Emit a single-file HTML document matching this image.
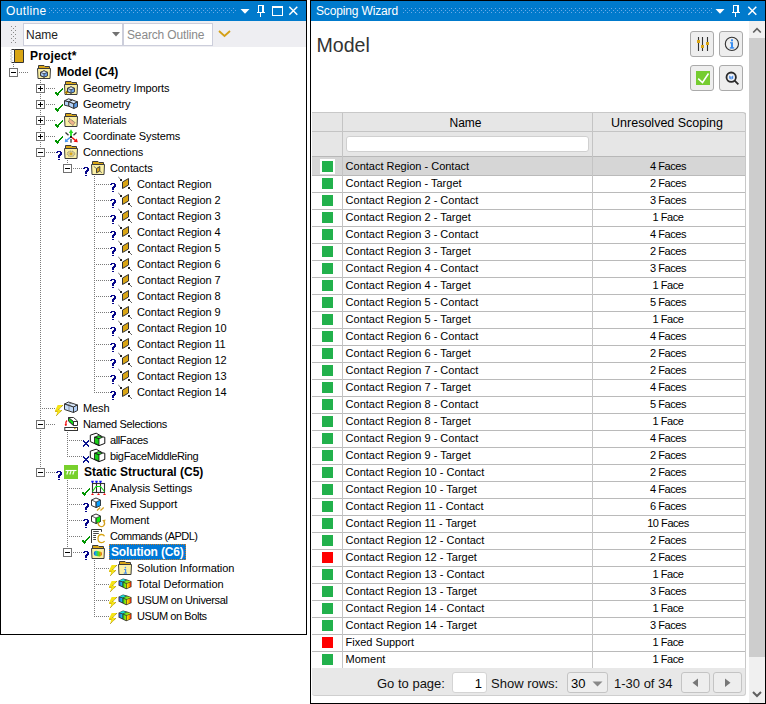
<!DOCTYPE html>
<html><head><meta charset="utf-8">
<style>
*{margin:0;padding:0;box-sizing:border-box}
html,body{width:766px;height:704px;overflow:hidden;background:#fff;font-family:"Liberation Sans", sans-serif;}
.panel{position:absolute;border:1px solid #000;background:#fff;overflow:hidden}
.title{position:absolute;left:0;top:0;right:0;height:20px;background:#007acc;color:#fff;font-size:12px;line-height:20px;padding-left:5px;letter-spacing:-0.15px}
.grip{position:absolute;top:7px;height:5px;background-image:radial-gradient(circle,#5fa6e6 0.7px,transparent 0.8px);background-size:4px 2.5px}
.tbar{position:absolute;left:0;top:20px;right:0;height:26px;background:#eeeef2}
.exp{position:absolute;width:9px;height:9px;border:1px solid #717171;background:#fff}
.exp .h{position:absolute;left:1px;top:3px;width:5px;height:1px;background:#000}
.exp .v{position:absolute;left:3px;top:1px;width:1px;height:5px;background:#000}
.ic{position:absolute;overflow:visible}
.vd{position:absolute;width:1px;background:linear-gradient(to bottom,#7a7a7a 50%,transparent 50%);background-size:1px 2px}
.hd{position:absolute;height:1px;background:linear-gradient(to right,#7a7a7a 50%,transparent 50%);background-size:2px 1px}
.tt{position:absolute;font-size:11px;line-height:16px;white-space:nowrap;color:#000;letter-spacing:-0.1px}
.tt.b{font-weight:bold;font-size:12px;letter-spacing:0}
.tt.sel{background:#0078d7;color:#fff;outline:1px dotted #c47a2a;outline-offset:-1px;padding:0 2px;margin-left:-2px}
.tr{position:absolute;left:312px;width:434px;background:#fff}
.tr.sel{background:#d6d6d6}
.hl{position:absolute;left:312px;width:434px;height:1px;background:#bababa}
.sq{position:absolute;left:322px;width:11px;height:11px}
.sq.g{background:#22b14c}
.sq.r{background:#ff0000}
.sqbg{position:absolute;left:320px;width:15px;height:15px;background:#fff}
.tn{position:absolute;left:345.6px;font-size:11px;line-height:16px;white-space:nowrap;color:#000}
.tf{position:absolute;left:592px;width:152px;text-align:center;font-size:11px;line-height:16px;white-space:nowrap;color:#000;letter-spacing:-0.45px}
</style></head><body>


<svg width="0" height="0" style="position:absolute"><defs>
<linearGradient id="gL" x1="0" x2="1" y1="0" y2="0"><stop offset="0" stop-color="#2848f0"/><stop offset="1" stop-color="#10e0e0"/></linearGradient>
<linearGradient id="gT" x1="0" x2="1" y1="0" y2="0"><stop offset="0" stop-color="#20d830"/><stop offset="1" stop-color="#e8f000"/></linearGradient>
<linearGradient id="gF" x1="0" x2="1" y1="0" y2="0"><stop offset="0" stop-color="#18d818"/><stop offset="1" stop-color="#c8f000"/></linearGradient>
<linearGradient id="gR" x1="0" x2="1" y1="0" y2="0"><stop offset="0" stop-color="#f8f000"/><stop offset="0.6" stop-color="#f8a000"/><stop offset="1" stop-color="#f01000"/></linearGradient>
<linearGradient id="gS" x1="0" x2="1" y1="0" y2="0"><stop offset="0" stop-color="#2040e0"/><stop offset="0.3" stop-color="#10d8d0"/><stop offset="0.55" stop-color="#50e010"/><stop offset="0.8" stop-color="#d0d000"/><stop offset="1" stop-color="#f02000"/></linearGradient>
</defs></svg>
<div class="panel" style="left:0;top:0;width:307px;height:635px">
 <div class="title" style="letter-spacing:0.35px">Outline</div>
 <svg style="position:absolute;left:-1px;top:-1px" width="307" height="21"><path d="M49 8h1v1h-1zM53 8h1v1h-1zM57 8h1v1h-1zM61 8h1v1h-1zM65 8h1v1h-1zM69 8h1v1h-1zM73 8h1v1h-1zM77 8h1v1h-1zM81 8h1v1h-1zM85 8h1v1h-1zM89 8h1v1h-1zM93 8h1v1h-1zM97 8h1v1h-1zM101 8h1v1h-1zM105 8h1v1h-1zM109 8h1v1h-1zM113 8h1v1h-1zM117 8h1v1h-1zM121 8h1v1h-1zM125 8h1v1h-1zM129 8h1v1h-1zM133 8h1v1h-1zM137 8h1v1h-1zM141 8h1v1h-1zM145 8h1v1h-1zM149 8h1v1h-1zM153 8h1v1h-1zM157 8h1v1h-1zM161 8h1v1h-1zM165 8h1v1h-1zM169 8h1v1h-1zM173 8h1v1h-1zM177 8h1v1h-1zM181 8h1v1h-1zM185 8h1v1h-1zM189 8h1v1h-1zM193 8h1v1h-1zM197 8h1v1h-1zM201 8h1v1h-1zM205 8h1v1h-1zM209 8h1v1h-1zM213 8h1v1h-1zM217 8h1v1h-1zM221 8h1v1h-1zM225 8h1v1h-1zM229 8h1v1h-1zM233 8h1v1h-1zM51 10h1v1h-1zM55 10h1v1h-1zM59 10h1v1h-1zM63 10h1v1h-1zM67 10h1v1h-1zM71 10h1v1h-1zM75 10h1v1h-1zM79 10h1v1h-1zM83 10h1v1h-1zM87 10h1v1h-1zM91 10h1v1h-1zM95 10h1v1h-1zM99 10h1v1h-1zM103 10h1v1h-1zM107 10h1v1h-1zM111 10h1v1h-1zM115 10h1v1h-1zM119 10h1v1h-1zM123 10h1v1h-1zM127 10h1v1h-1zM131 10h1v1h-1zM135 10h1v1h-1zM139 10h1v1h-1zM143 10h1v1h-1zM147 10h1v1h-1zM151 10h1v1h-1zM155 10h1v1h-1zM159 10h1v1h-1zM163 10h1v1h-1zM167 10h1v1h-1zM171 10h1v1h-1zM175 10h1v1h-1zM179 10h1v1h-1zM183 10h1v1h-1zM187 10h1v1h-1zM191 10h1v1h-1zM195 10h1v1h-1zM199 10h1v1h-1zM203 10h1v1h-1zM207 10h1v1h-1zM211 10h1v1h-1zM215 10h1v1h-1zM219 10h1v1h-1zM223 10h1v1h-1zM227 10h1v1h-1zM231 10h1v1h-1zM235 10h1v1h-1zM49 12h1v1h-1zM53 12h1v1h-1zM57 12h1v1h-1zM61 12h1v1h-1zM65 12h1v1h-1zM69 12h1v1h-1zM73 12h1v1h-1zM77 12h1v1h-1zM81 12h1v1h-1zM85 12h1v1h-1zM89 12h1v1h-1zM93 12h1v1h-1zM97 12h1v1h-1zM101 12h1v1h-1zM105 12h1v1h-1zM109 12h1v1h-1zM113 12h1v1h-1zM117 12h1v1h-1zM121 12h1v1h-1zM125 12h1v1h-1zM129 12h1v1h-1zM133 12h1v1h-1zM137 12h1v1h-1zM141 12h1v1h-1zM145 12h1v1h-1zM149 12h1v1h-1zM153 12h1v1h-1zM157 12h1v1h-1zM161 12h1v1h-1zM165 12h1v1h-1zM169 12h1v1h-1zM173 12h1v1h-1zM177 12h1v1h-1zM181 12h1v1h-1zM185 12h1v1h-1zM189 12h1v1h-1zM193 12h1v1h-1zM197 12h1v1h-1zM201 12h1v1h-1zM205 12h1v1h-1zM209 12h1v1h-1zM213 12h1v1h-1zM217 12h1v1h-1zM221 12h1v1h-1zM225 12h1v1h-1zM229 12h1v1h-1zM233 12h1v1h-1z" fill="#6aaae8"/><path d="M240.5 9 H249.5 L245 13.7 Z" fill="#fff"/><rect x="258" y="5" width="1" height="7" fill="#fff"/><rect x="262" y="5" width="2" height="7" fill="#fff"/><rect x="258" y="5" width="6" height="1" fill="#fff"/><rect x="257" y="12" width="8" height="1" fill="#fff"/><rect x="260" y="13" width="1" height="4" fill="#fff"/><rect x="272" y="6" width="11" height="2" fill="#fff"/><rect x="272" y="6" width="1" height="10" fill="#fff"/><rect x="282" y="6" width="1" height="10" fill="#fff"/><rect x="272" y="15" width="11" height="1" fill="#fff"/><path d="M289.3 6.8 L297.3 14.8 M297.3 6.8 L289.3 14.8" stroke="#fff" stroke-width="1.5"/></svg>
 <div class="tbar"></div>
 <svg style="position:absolute;left:-1px;top:-1px" width="20" height="50"><path d="M11 26h1v1h-1zM15 26h1v1h-1zM13 28h1v1h-1zM11 30h1v1h-1zM15 30h1v1h-1zM13 32h1v1h-1zM11 34h1v1h-1zM15 34h1v1h-1zM13 36h1v1h-1zM11 38h1v1h-1zM15 38h1v1h-1zM13 40h1v1h-1zM11 42h1v1h-1zM15 42h1v1h-1z" fill="#8a8a8a"/></svg>
 <div style="position:absolute;left:22px;top:22px;width:100px;height:23px;background:#fff;border:1px solid #cccedb"></div>
 <div style="position:absolute;left:25px;top:23px;height:23px;line-height:23px;font-size:12px;color:#1e1e1e">Name</div>
 <svg style="position:absolute;left:111px;top:31px" width="9" height="5"><path d="M0 0 H8 L4 4.5 Z" fill="#717171"/></svg>
 <div style="position:absolute;left:122px;top:22px;width:90px;height:23px;background:#fff;border:1px solid #cccedb"></div>
 <div style="position:absolute;left:126px;top:23px;height:23px;line-height:23px;font-size:12px;color:#8a8a8a;letter-spacing:-0.15px">Search Outline</div>
 <svg style="position:absolute;left:217px;top:29px" width="14" height="8"><path d="M1 1 L6.5 6 L12 1" fill="none" stroke="#d4a017" stroke-width="1.8"/></svg>
</div>

<div style="position:absolute;left:0;top:0;width:307px;height:635px;overflow:hidden">
<div class="vd" style="left:13px;top:64px;height:9px"></div>
<div class="vd" style="left:40px;top:80px;height:393px"></div>
<div class="vd" style="left:67px;top:160px;height:9px"></div>
<div class="vd" style="left:94px;top:176px;height:217px"></div>
<div class="vd" style="left:67px;top:432px;height:25px"></div>
<div class="vd" style="left:67px;top:480px;height:73px"></div>
<div class="vd" style="left:94px;top:560px;height:57px"></div>
<div class="hd" style="left:19px;top:72px;width:9px"></div>
<div class="hd" style="left:46px;top:88px;width:9px"></div>
<div class="hd" style="left:46px;top:104px;width:9px"></div>
<div class="hd" style="left:46px;top:120px;width:9px"></div>
<div class="hd" style="left:46px;top:136px;width:9px"></div>
<div class="hd" style="left:46px;top:152px;width:9px"></div>
<div class="hd" style="left:73px;top:168px;width:9px"></div>
<div class="hd" style="left:96px;top:184px;width:13px"></div>
<div class="hd" style="left:96px;top:200px;width:13px"></div>
<div class="hd" style="left:96px;top:216px;width:13px"></div>
<div class="hd" style="left:96px;top:232px;width:13px"></div>
<div class="hd" style="left:96px;top:248px;width:13px"></div>
<div class="hd" style="left:96px;top:264px;width:13px"></div>
<div class="hd" style="left:96px;top:280px;width:13px"></div>
<div class="hd" style="left:96px;top:296px;width:13px"></div>
<div class="hd" style="left:96px;top:312px;width:13px"></div>
<div class="hd" style="left:96px;top:328px;width:13px"></div>
<div class="hd" style="left:96px;top:344px;width:13px"></div>
<div class="hd" style="left:96px;top:360px;width:13px"></div>
<div class="hd" style="left:96px;top:376px;width:13px"></div>
<div class="hd" style="left:96px;top:392px;width:13px"></div>
<div class="hd" style="left:42px;top:408px;width:13px"></div>
<div class="hd" style="left:46px;top:424px;width:9px"></div>
<div class="hd" style="left:69px;top:440px;width:13px"></div>
<div class="hd" style="left:69px;top:456px;width:13px"></div>
<div class="hd" style="left:46px;top:472px;width:9px"></div>
<div class="hd" style="left:69px;top:488px;width:13px"></div>
<div class="hd" style="left:69px;top:504px;width:13px"></div>
<div class="hd" style="left:69px;top:520px;width:13px"></div>
<div class="hd" style="left:69px;top:536px;width:13px"></div>
<div class="hd" style="left:73px;top:552px;width:9px"></div>
<div class="hd" style="left:96px;top:568px;width:13px"></div>
<div class="hd" style="left:96px;top:584px;width:13px"></div>
<div class="hd" style="left:96px;top:600px;width:13px"></div>
<div class="hd" style="left:96px;top:616px;width:13px"></div>
<svg class="ic" style="left:10px;top:48px" width="16" height="16"><path d="M4.5 1.5 H13.5 V14.5 H4.5" fill="#d9a514" stroke="#333"/><rect x="2" y="1.5" width="2.5" height="13" fill="#fff"/><path d="M4.5 1.5 H1.5 M4.5 14.5 H1.5 M4.5 1.5 V14.5" stroke="#333" fill="none"/><path d="M0.5 2 L2 3.5 L0.5 5 L2 6.5 L0.5 8 L2 9.5 L0.5 11 L2 12.5 L0.5 14" fill="none" stroke="#b0b0b0" stroke-width="0.9"/></svg>
<div class="tt b" style="left:30px;top:48px;letter-spacing:0.15px">Project*</div>
<div class="exp" style="left:9px;top:68px"><div class="h"></div></div>
<svg class="ic" style="left:37px;top:64px" width="16" height="16"><path d="M1.5 4.5 V1.5 H7 L8 2.5 H12.5 V4.5" fill="#d9a514" stroke="#3c3c3c"/><path d="M0.5 4.5 H13.5 L13 14.5 H1 Z" fill="#fbf0a4" stroke="#3c3c3c"/><path d="M3.5 8.3 L7 6.8 L10.5 8.3 V11.7 L7 13.2 L3.5 11.7 Z" fill="#a6c8f4" stroke="#3a3a3a" stroke-width="0.9"/><path d="M3.5 8.3 L7 9.8 L10.5 8.3 L7 6.8 Z" fill="#d8e8fc"/><path d="M7 9.8 L10.5 8.3 V11.7 L7 13.2 Z" fill="#6aa4ec"/><path d="M3.5 8.3 L7 6.8 L10.5 8.3 V11.7 L7 13.2 L3.5 11.7 Z M3.5 8.3 L7 9.8 L10.5 8.3 M7 9.8 V13.2" fill="none" stroke="#3a3a3a" stroke-width="0.8"/></svg>
<div class="tt b" style="left:57px;top:64px">Model (C4)</div>
<div class="exp" style="left:36px;top:84px"><div class="h"></div><div class="v"></div></div>
<svg class="ic" style="left:54px;top:80px" width="10" height="16"><path d="M8 8h1v1h-1zM7 9h1v1h-1zM8 9h1v1h-1zM6 10h1v1h-1zM7 10h1v1h-1zM5 11h1v1h-1zM6 11h1v1h-1zM4 12h1v1h-1zM5 12h1v1h-1zM1 12h1v1h-1zM2 12h1v1h-1zM1 13h1v1h-1zM2 13h1v1h-1zM3 13h1v1h-1zM4 13h1v1h-1zM2 14h1v1h-1zM3 14h1v1h-1zM4 14h1v1h-1zM3 15h1v1h-1z" fill="#009400"/></svg>
<svg class="ic" style="left:64px;top:80px" width="16" height="16"><path d="M1.5 4.5 V1.5 H7 L8 2.5 H12.5 V4.5" fill="#d9a514" stroke="#3c3c3c"/><path d="M0.5 4.5 H13.5 L13 14.5 H1 Z" fill="#fbf0a4" stroke="#3c3c3c"/><path d="M3.5 8.3 L7 6.8 L10.5 8.3 V11.7 L7 13.2 L3.5 11.7 Z" fill="#a6c8f4" stroke="#3a3a3a" stroke-width="0.9"/><path d="M3.5 8.3 L7 9.8 L10.5 8.3 L7 6.8 Z" fill="#d8e8fc"/><path d="M7 9.8 L10.5 8.3 V11.7 L7 13.2 Z" fill="#6aa4ec"/><path d="M3.5 8.3 L7 6.8 L10.5 8.3 V11.7 L7 13.2 L3.5 11.7 Z M3.5 8.3 L7 9.8 L10.5 8.3 M7 9.8 V13.2" fill="none" stroke="#3a3a3a" stroke-width="0.8"/><path d="M2.5 10.8 V14.2 M0.8 12.5 H4.2" stroke="#b08000" stroke-width="1.1"/></svg>
<div class="tt" style="left:83px;top:80px">Geometry Imports</div>
<div class="exp" style="left:36px;top:100px"><div class="h"></div><div class="v"></div></div>
<svg class="ic" style="left:54px;top:96px" width="10" height="16"><path d="M8 8h1v1h-1zM7 9h1v1h-1zM8 9h1v1h-1zM6 10h1v1h-1zM7 10h1v1h-1zM5 11h1v1h-1zM6 11h1v1h-1zM4 12h1v1h-1zM5 12h1v1h-1zM1 12h1v1h-1zM2 12h1v1h-1zM1 13h1v1h-1zM2 13h1v1h-1zM3 13h1v1h-1zM4 13h1v1h-1zM2 14h1v1h-1zM3 14h1v1h-1zM4 14h1v1h-1zM3 15h1v1h-1z" fill="#009400"/></svg>
<svg class="ic" style="left:64px;top:96px" width="16" height="16"><path d="M0.5 4.8 L4.5 2.8 L8.5 4 L4.8 5.8 Z" fill="#d2e4fb" stroke="#333"/><path d="M0.5 4.8 L4.8 5.8 V10.2 L0.5 9.2 Z" fill="#b4d2f8" stroke="#333"/><path d="M4.8 5.8 L8.5 4 L13.5 5.8 L9.8 7.8 Z" fill="#d2e4fb" stroke="#333"/><path d="M4.8 5.8 L9.8 7.8 V12.5 L4.8 10.2 Z" fill="#b4d2f8" stroke="#333"/><path d="M9.8 7.8 L13.5 5.8 V10.8 L9.8 12.5 Z" fill="#5c9cec" stroke="#333"/></svg>
<div class="tt" style="left:83px;top:96px">Geometry</div>
<div class="exp" style="left:36px;top:116px"><div class="h"></div><div class="v"></div></div>
<svg class="ic" style="left:54px;top:112px" width="10" height="16"><path d="M8 8h1v1h-1zM7 9h1v1h-1zM8 9h1v1h-1zM6 10h1v1h-1zM7 10h1v1h-1zM5 11h1v1h-1zM6 11h1v1h-1zM4 12h1v1h-1zM5 12h1v1h-1zM1 12h1v1h-1zM2 12h1v1h-1zM1 13h1v1h-1zM2 13h1v1h-1zM3 13h1v1h-1zM4 13h1v1h-1zM2 14h1v1h-1zM3 14h1v1h-1zM4 14h1v1h-1zM3 15h1v1h-1z" fill="#009400"/></svg>
<svg class="ic" style="left:64px;top:112px" width="16" height="16"><path d="M1.5 4.5 V1.5 H7 L8 2.5 H12.5 V4.5" fill="#d9a514" stroke="#3c3c3c"/><path d="M0.5 4.5 H13.5 L13 14.5 H1 Z" fill="#fbf0a4" stroke="#3c3c3c"/><path d="M5.5 6.5 L11 10.5 L9 13.5 L4.5 10 Z" fill="#f0b48c" stroke="#555" stroke-width="0.8" stroke-dasharray="1 0.6"/></svg>
<div class="tt" style="left:83px;top:112px">Materials</div>
<div class="exp" style="left:36px;top:132px"><div class="h"></div><div class="v"></div></div>
<svg class="ic" style="left:54px;top:128px" width="10" height="16"><path d="M8 8h1v1h-1zM7 9h1v1h-1zM8 9h1v1h-1zM6 10h1v1h-1zM7 10h1v1h-1zM5 11h1v1h-1zM6 11h1v1h-1zM4 12h1v1h-1zM5 12h1v1h-1zM1 12h1v1h-1zM2 12h1v1h-1zM1 13h1v1h-1zM2 13h1v1h-1zM3 13h1v1h-1zM4 13h1v1h-1zM2 14h1v1h-1zM3 14h1v1h-1zM4 14h1v1h-1zM3 15h1v1h-1z" fill="#009400"/></svg>
<svg class="ic" style="left:64px;top:128px" width="16" height="16"><path d="M7 8.5 V3" stroke="#22dd22" stroke-width="1.8"/><path d="M4.8 5 L7 1.2 L9.2 5 Z" fill="#22dd22"/><path d="M8 9.5 L11.5 12.5" stroke="#f01010" stroke-width="1.6"/><path d="M13.8 14.2 L9.5 13.8 L12.8 10.5 Z" fill="#f01010"/><path d="M6 9.5 L2.5 12.5" stroke="#4a9af0" stroke-width="1.6"/><path d="M0.8 14.2 L1.2 10.5 L4.5 13.8 Z" fill="#4a9af0"/><path d="M1.5 4.5 L4.5 7.2 M12.5 4.5 L9.5 7.2" stroke="#333" stroke-width="1.3"/><rect x="6" y="8" width="2" height="2" fill="#222"/><rect x="6" y="11" width="2" height="3.7" fill="#7a7a7a"/></svg>
<div class="tt" style="left:83px;top:128px">Coordinate Systems</div>
<div class="exp" style="left:36px;top:148px"><div class="h"></div></div>
<svg class="ic" style="left:54px;top:144px" width="10" height="16"><path d="M3 7h4v1h-4zM2 8h2v1h-2zM6 8h2v1h-2zM6 9h2v1h-2zM5 10h3v1h-3zM4 11h3v1h-3zM4 12h2v1h-2zM4 13h2v1h-2zM4 15h2v1h-2z" fill="#06068a"/></svg>
<svg class="ic" style="left:64px;top:144px" width="16" height="16"><path d="M1.5 4.5 V1.5 H7 L8 2.5 H12.5 V4.5" fill="#d9a514" stroke="#3c3c3c"/><path d="M0.5 4.5 H13.5 L13 14.5 H1 Z" fill="#fbf0a4" stroke="#3c3c3c"/><ellipse cx="7" cy="9.8" rx="3.8" ry="2.8" fill="#d8cc90" stroke="#777" stroke-width="0.8" stroke-dasharray="1 0.8"/><circle cx="7" cy="9.8" r="1.4" fill="#d9a514"/></svg>
<div class="tt" style="left:83px;top:144px">Connections</div>
<div class="exp" style="left:63px;top:164px"><div class="h"></div></div>
<svg class="ic" style="left:81px;top:160px" width="10" height="16"><path d="M3 7h4v1h-4zM2 8h2v1h-2zM6 8h2v1h-2zM6 9h2v1h-2zM5 10h3v1h-3zM4 11h3v1h-3zM4 12h2v1h-2zM4 13h2v1h-2zM4 15h2v1h-2z" fill="#06068a"/></svg>
<svg class="ic" style="left:91px;top:160px" width="16" height="16"><path d="M1.5 4.5 V1.5 H7 L8 2.5 H12.5 V4.5" fill="#d9a514" stroke="#3c3c3c"/><path d="M0.5 4.5 H13.5 L13 14.5 H1 Z" fill="#fbf0a4" stroke="#3c3c3c"/><path d="M5.5 8.5 L8.8 6.5 V11 L5.5 12.8 Z" fill="#d9a514" stroke="#333" stroke-width="0.9"/><path d="M2.7 6.3 L5.2 8.3 M9 11.3 L10.8 12.6" stroke="#555" stroke-width="0.8"/></svg>
<div class="tt" style="left:110px;top:160px">Contacts</div>
<svg class="ic" style="left:108px;top:176px" width="10" height="16"><path d="M3 7h4v1h-4zM2 8h2v1h-2zM6 8h2v1h-2zM6 9h2v1h-2zM5 10h3v1h-3zM4 11h3v1h-3zM4 12h2v1h-2zM4 13h2v1h-2zM4 15h2v1h-2z" fill="#06068a"/></svg>
<svg class="ic" style="left:118px;top:176px" width="16" height="16"><path d="M4.5 6 L10.5 2.5 V9 L4.5 12.5 Z" fill="#d9a514" stroke="#333" stroke-width="1"/><path d="M0.3 1 L2.5 3.2 M11.5 12.5 L14 15" stroke="#555" stroke-width="0.9"/><rect x="2" y="3" width="2" height="2" fill="#222"/><rect x="10" y="11" width="2" height="2" fill="#222"/></svg>
<div class="tt" style="left:137px;top:176px">Contact Region</div>
<svg class="ic" style="left:108px;top:192px" width="10" height="16"><path d="M3 7h4v1h-4zM2 8h2v1h-2zM6 8h2v1h-2zM6 9h2v1h-2zM5 10h3v1h-3zM4 11h3v1h-3zM4 12h2v1h-2zM4 13h2v1h-2zM4 15h2v1h-2z" fill="#06068a"/></svg>
<svg class="ic" style="left:118px;top:192px" width="16" height="16"><path d="M4.5 6 L10.5 2.5 V9 L4.5 12.5 Z" fill="#d9a514" stroke="#333" stroke-width="1"/><path d="M0.3 1 L2.5 3.2 M11.5 12.5 L14 15" stroke="#555" stroke-width="0.9"/><rect x="2" y="3" width="2" height="2" fill="#222"/><rect x="10" y="11" width="2" height="2" fill="#222"/></svg>
<div class="tt" style="left:137px;top:192px">Contact Region 2</div>
<svg class="ic" style="left:108px;top:208px" width="10" height="16"><path d="M3 7h4v1h-4zM2 8h2v1h-2zM6 8h2v1h-2zM6 9h2v1h-2zM5 10h3v1h-3zM4 11h3v1h-3zM4 12h2v1h-2zM4 13h2v1h-2zM4 15h2v1h-2z" fill="#06068a"/></svg>
<svg class="ic" style="left:118px;top:208px" width="16" height="16"><path d="M4.5 6 L10.5 2.5 V9 L4.5 12.5 Z" fill="#d9a514" stroke="#333" stroke-width="1"/><path d="M0.3 1 L2.5 3.2 M11.5 12.5 L14 15" stroke="#555" stroke-width="0.9"/><rect x="2" y="3" width="2" height="2" fill="#222"/><rect x="10" y="11" width="2" height="2" fill="#222"/></svg>
<div class="tt" style="left:137px;top:208px">Contact Region 3</div>
<svg class="ic" style="left:108px;top:224px" width="10" height="16"><path d="M3 7h4v1h-4zM2 8h2v1h-2zM6 8h2v1h-2zM6 9h2v1h-2zM5 10h3v1h-3zM4 11h3v1h-3zM4 12h2v1h-2zM4 13h2v1h-2zM4 15h2v1h-2z" fill="#06068a"/></svg>
<svg class="ic" style="left:118px;top:224px" width="16" height="16"><path d="M4.5 6 L10.5 2.5 V9 L4.5 12.5 Z" fill="#d9a514" stroke="#333" stroke-width="1"/><path d="M0.3 1 L2.5 3.2 M11.5 12.5 L14 15" stroke="#555" stroke-width="0.9"/><rect x="2" y="3" width="2" height="2" fill="#222"/><rect x="10" y="11" width="2" height="2" fill="#222"/></svg>
<div class="tt" style="left:137px;top:224px">Contact Region 4</div>
<svg class="ic" style="left:108px;top:240px" width="10" height="16"><path d="M3 7h4v1h-4zM2 8h2v1h-2zM6 8h2v1h-2zM6 9h2v1h-2zM5 10h3v1h-3zM4 11h3v1h-3zM4 12h2v1h-2zM4 13h2v1h-2zM4 15h2v1h-2z" fill="#06068a"/></svg>
<svg class="ic" style="left:118px;top:240px" width="16" height="16"><path d="M4.5 6 L10.5 2.5 V9 L4.5 12.5 Z" fill="#d9a514" stroke="#333" stroke-width="1"/><path d="M0.3 1 L2.5 3.2 M11.5 12.5 L14 15" stroke="#555" stroke-width="0.9"/><rect x="2" y="3" width="2" height="2" fill="#222"/><rect x="10" y="11" width="2" height="2" fill="#222"/></svg>
<div class="tt" style="left:137px;top:240px">Contact Region 5</div>
<svg class="ic" style="left:108px;top:256px" width="10" height="16"><path d="M3 7h4v1h-4zM2 8h2v1h-2zM6 8h2v1h-2zM6 9h2v1h-2zM5 10h3v1h-3zM4 11h3v1h-3zM4 12h2v1h-2zM4 13h2v1h-2zM4 15h2v1h-2z" fill="#06068a"/></svg>
<svg class="ic" style="left:118px;top:256px" width="16" height="16"><path d="M4.5 6 L10.5 2.5 V9 L4.5 12.5 Z" fill="#d9a514" stroke="#333" stroke-width="1"/><path d="M0.3 1 L2.5 3.2 M11.5 12.5 L14 15" stroke="#555" stroke-width="0.9"/><rect x="2" y="3" width="2" height="2" fill="#222"/><rect x="10" y="11" width="2" height="2" fill="#222"/></svg>
<div class="tt" style="left:137px;top:256px">Contact Region 6</div>
<svg class="ic" style="left:108px;top:272px" width="10" height="16"><path d="M3 7h4v1h-4zM2 8h2v1h-2zM6 8h2v1h-2zM6 9h2v1h-2zM5 10h3v1h-3zM4 11h3v1h-3zM4 12h2v1h-2zM4 13h2v1h-2zM4 15h2v1h-2z" fill="#06068a"/></svg>
<svg class="ic" style="left:118px;top:272px" width="16" height="16"><path d="M4.5 6 L10.5 2.5 V9 L4.5 12.5 Z" fill="#d9a514" stroke="#333" stroke-width="1"/><path d="M0.3 1 L2.5 3.2 M11.5 12.5 L14 15" stroke="#555" stroke-width="0.9"/><rect x="2" y="3" width="2" height="2" fill="#222"/><rect x="10" y="11" width="2" height="2" fill="#222"/></svg>
<div class="tt" style="left:137px;top:272px">Contact Region 7</div>
<svg class="ic" style="left:108px;top:288px" width="10" height="16"><path d="M3 7h4v1h-4zM2 8h2v1h-2zM6 8h2v1h-2zM6 9h2v1h-2zM5 10h3v1h-3zM4 11h3v1h-3zM4 12h2v1h-2zM4 13h2v1h-2zM4 15h2v1h-2z" fill="#06068a"/></svg>
<svg class="ic" style="left:118px;top:288px" width="16" height="16"><path d="M4.5 6 L10.5 2.5 V9 L4.5 12.5 Z" fill="#d9a514" stroke="#333" stroke-width="1"/><path d="M0.3 1 L2.5 3.2 M11.5 12.5 L14 15" stroke="#555" stroke-width="0.9"/><rect x="2" y="3" width="2" height="2" fill="#222"/><rect x="10" y="11" width="2" height="2" fill="#222"/></svg>
<div class="tt" style="left:137px;top:288px">Contact Region 8</div>
<svg class="ic" style="left:108px;top:304px" width="10" height="16"><path d="M3 7h4v1h-4zM2 8h2v1h-2zM6 8h2v1h-2zM6 9h2v1h-2zM5 10h3v1h-3zM4 11h3v1h-3zM4 12h2v1h-2zM4 13h2v1h-2zM4 15h2v1h-2z" fill="#06068a"/></svg>
<svg class="ic" style="left:118px;top:304px" width="16" height="16"><path d="M4.5 6 L10.5 2.5 V9 L4.5 12.5 Z" fill="#d9a514" stroke="#333" stroke-width="1"/><path d="M0.3 1 L2.5 3.2 M11.5 12.5 L14 15" stroke="#555" stroke-width="0.9"/><rect x="2" y="3" width="2" height="2" fill="#222"/><rect x="10" y="11" width="2" height="2" fill="#222"/></svg>
<div class="tt" style="left:137px;top:304px">Contact Region 9</div>
<svg class="ic" style="left:108px;top:320px" width="10" height="16"><path d="M3 7h4v1h-4zM2 8h2v1h-2zM6 8h2v1h-2zM6 9h2v1h-2zM5 10h3v1h-3zM4 11h3v1h-3zM4 12h2v1h-2zM4 13h2v1h-2zM4 15h2v1h-2z" fill="#06068a"/></svg>
<svg class="ic" style="left:118px;top:320px" width="16" height="16"><path d="M4.5 6 L10.5 2.5 V9 L4.5 12.5 Z" fill="#d9a514" stroke="#333" stroke-width="1"/><path d="M0.3 1 L2.5 3.2 M11.5 12.5 L14 15" stroke="#555" stroke-width="0.9"/><rect x="2" y="3" width="2" height="2" fill="#222"/><rect x="10" y="11" width="2" height="2" fill="#222"/></svg>
<div class="tt" style="left:137px;top:320px">Contact Region 10</div>
<svg class="ic" style="left:108px;top:336px" width="10" height="16"><path d="M3 7h4v1h-4zM2 8h2v1h-2zM6 8h2v1h-2zM6 9h2v1h-2zM5 10h3v1h-3zM4 11h3v1h-3zM4 12h2v1h-2zM4 13h2v1h-2zM4 15h2v1h-2z" fill="#06068a"/></svg>
<svg class="ic" style="left:118px;top:336px" width="16" height="16"><path d="M4.5 6 L10.5 2.5 V9 L4.5 12.5 Z" fill="#d9a514" stroke="#333" stroke-width="1"/><path d="M0.3 1 L2.5 3.2 M11.5 12.5 L14 15" stroke="#555" stroke-width="0.9"/><rect x="2" y="3" width="2" height="2" fill="#222"/><rect x="10" y="11" width="2" height="2" fill="#222"/></svg>
<div class="tt" style="left:137px;top:336px">Contact Region 11</div>
<svg class="ic" style="left:108px;top:352px" width="10" height="16"><path d="M3 7h4v1h-4zM2 8h2v1h-2zM6 8h2v1h-2zM6 9h2v1h-2zM5 10h3v1h-3zM4 11h3v1h-3zM4 12h2v1h-2zM4 13h2v1h-2zM4 15h2v1h-2z" fill="#06068a"/></svg>
<svg class="ic" style="left:118px;top:352px" width="16" height="16"><path d="M4.5 6 L10.5 2.5 V9 L4.5 12.5 Z" fill="#d9a514" stroke="#333" stroke-width="1"/><path d="M0.3 1 L2.5 3.2 M11.5 12.5 L14 15" stroke="#555" stroke-width="0.9"/><rect x="2" y="3" width="2" height="2" fill="#222"/><rect x="10" y="11" width="2" height="2" fill="#222"/></svg>
<div class="tt" style="left:137px;top:352px">Contact Region 12</div>
<svg class="ic" style="left:108px;top:368px" width="10" height="16"><path d="M3 7h4v1h-4zM2 8h2v1h-2zM6 8h2v1h-2zM6 9h2v1h-2zM5 10h3v1h-3zM4 11h3v1h-3zM4 12h2v1h-2zM4 13h2v1h-2zM4 15h2v1h-2z" fill="#06068a"/></svg>
<svg class="ic" style="left:118px;top:368px" width="16" height="16"><path d="M4.5 6 L10.5 2.5 V9 L4.5 12.5 Z" fill="#d9a514" stroke="#333" stroke-width="1"/><path d="M0.3 1 L2.5 3.2 M11.5 12.5 L14 15" stroke="#555" stroke-width="0.9"/><rect x="2" y="3" width="2" height="2" fill="#222"/><rect x="10" y="11" width="2" height="2" fill="#222"/></svg>
<div class="tt" style="left:137px;top:368px">Contact Region 13</div>
<svg class="ic" style="left:108px;top:384px" width="10" height="16"><path d="M3 7h4v1h-4zM2 8h2v1h-2zM6 8h2v1h-2zM6 9h2v1h-2zM5 10h3v1h-3zM4 11h3v1h-3zM4 12h2v1h-2zM4 13h2v1h-2zM4 15h2v1h-2z" fill="#06068a"/></svg>
<svg class="ic" style="left:118px;top:384px" width="16" height="16"><path d="M4.5 6 L10.5 2.5 V9 L4.5 12.5 Z" fill="#d9a514" stroke="#333" stroke-width="1"/><path d="M0.3 1 L2.5 3.2 M11.5 12.5 L14 15" stroke="#555" stroke-width="0.9"/><rect x="2" y="3" width="2" height="2" fill="#222"/><rect x="10" y="11" width="2" height="2" fill="#222"/></svg>
<div class="tt" style="left:137px;top:384px">Contact Region 14</div>
<svg class="ic" style="left:54px;top:400px" width="10" height="16"><path d="M3.7 5 L9 5 L4.6 9.8 L8 10.2 L2.2 15.8 L3.2 11.8 L1 11.6 L1.2 10.2 Z" fill="#f6e416"/><path d="M9 5 L4.6 9.8 M8 10.2 L2.2 15.8" stroke="#9a7a00" stroke-width="1" stroke-dasharray="1 0.8"/><path d="M1 11.2 H3.6" stroke="#c8a000" stroke-width="1"/></svg>
<svg class="ic" style="left:64px;top:400px" width="16" height="16"><path d="M0.5 4 L4.5 2 L13.5 5 L9.5 7 Z" fill="#d8e8fc" stroke="#333"/><path d="M0.5 4 L9.5 7 V12.5 L0.5 9.5 Z" fill="#c4dbf8" stroke="#333"/><path d="M9.5 7 L13.5 5 V10.5 L9.5 12.5 Z" fill="#b0cef6" stroke="#333"/><path d="M5 5.5 V11 M4.5 2.5 L9 4 M7 3.3 L3.5 5" fill="none" stroke="#666" stroke-width="0.6"/></svg>
<div class="tt" style="left:83px;top:400px">Mesh</div>
<div class="exp" style="left:36px;top:420px"><div class="h"></div></div>
<svg class="ic" style="left:64px;top:416px" width="16" height="16"><path d="M4.5 1.5 H9.5 L13.5 5 V9.5 H9.5 L4.5 5 Z" fill="#fff" stroke="#333"/><path d="M4.5 1.5 L9.5 5.5 V9.5 L4.5 5 Z" fill="#10e010" stroke="#333"/><path d="M9.5 5.5 H13.5" stroke="#333"/><rect x="0.8" y="11.5" width="12.7" height="3" fill="#fff" stroke="#333"/><rect x="10" y="12" width="1.6" height="1.2" fill="#d9a514"/><path d="M3 4.5 Q1.2 6 2 8.5" fill="none" stroke="#f01010" stroke-width="1.3"/><circle cx="1.8" cy="8.8" r="1.1" fill="#f01010"/></svg>
<div class="tt" style="left:83px;top:416px;letter-spacing:-0.33px">Named Selections</div>
<svg class="ic" style="left:81px;top:432px" width="10" height="16"><path d="M2 8h1v1h-1zM7 8h1v1h-1zM2 9h2v1h-2zM6 9h2v1h-2zM3 10h2v1h-2zM5 10h2v1h-2zM4 11h2v1h-2zM3 12h2v1h-2zM5 12h2v1h-2zM2 13h2v1h-2zM6 13h2v1h-2zM2 14h1v1h-1zM7 14h1v1h-1z" fill="#0a1490"/></svg>
<svg class="ic" style="left:91px;top:432px" width="16" height="16"><path d="M-0.7 3.2 L5.2 1.2 L11.5 4.8 L13.8 5.3 V11.4 L7.9 13.7 L-0.7 9.6 Z" fill="#fff" stroke="#111" stroke-width="1"/><path d="M3.5 5.2 L7.5 3.6 L11.5 5.2 L8 6.8 Z" fill="#22e022" stroke="#111" stroke-width="0.8"/><path d="M3.5 5.2 L8 6.8 V13.2 L3.5 11.2 Z" fill="#18d018" stroke="#111" stroke-width="0.8"/></svg>
<div class="tt" style="left:110px;top:432px;letter-spacing:-0.39px">allFaces</div>
<svg class="ic" style="left:81px;top:448px" width="10" height="16"><path d="M2 8h1v1h-1zM7 8h1v1h-1zM2 9h2v1h-2zM6 9h2v1h-2zM3 10h2v1h-2zM5 10h2v1h-2zM4 11h2v1h-2zM3 12h2v1h-2zM5 12h2v1h-2zM2 13h2v1h-2zM6 13h2v1h-2zM2 14h1v1h-1zM7 14h1v1h-1z" fill="#0a1490"/></svg>
<svg class="ic" style="left:91px;top:448px" width="16" height="16"><path d="M-0.7 3.2 L5.2 1.2 L11.5 4.8 L13.8 5.3 V11.4 L7.9 13.7 L-0.7 9.6 Z" fill="#fff" stroke="#111" stroke-width="1"/><path d="M3.5 5.2 L7.5 3.6 L11.5 5.2 L8 6.8 Z" fill="#22e022" stroke="#111" stroke-width="0.8"/><path d="M3.5 5.2 L8 6.8 V13.2 L3.5 11.2 Z" fill="#18d018" stroke="#111" stroke-width="0.8"/></svg>
<div class="tt" style="left:110px;top:448px;letter-spacing:-0.35px">bigFaceMiddleRing</div>
<div class="exp" style="left:36px;top:468px"><div class="h"></div></div>
<svg class="ic" style="left:54px;top:464px" width="10" height="16"><path d="M3 7h4v1h-4zM2 8h2v1h-2zM6 8h2v1h-2zM6 9h2v1h-2zM5 10h3v1h-3zM4 11h3v1h-3zM4 12h2v1h-2zM4 13h2v1h-2zM4 15h2v1h-2z" fill="#06068a"/></svg>
<svg class="ic" style="left:64px;top:464px" width="16" height="16"><rect x="0" y="1" width="14" height="14" fill="#78d02c"/><path d="M1.5 6.5 H12.5" stroke="#fff" stroke-width="1.1"/><path d="M4 7 L2.8 10.5 M7 7 L5.8 10.5 M10 7 L8.8 10.5" stroke="#f4fff0" stroke-width="1.2"/></svg>
<div class="tt b" style="left:84px;top:464px">Static Structural (C5)</div>
<svg class="ic" style="left:81px;top:480px" width="10" height="16"><path d="M8 8h1v1h-1zM7 9h1v1h-1zM8 9h1v1h-1zM6 10h1v1h-1zM7 10h1v1h-1zM5 11h1v1h-1zM6 11h1v1h-1zM4 12h1v1h-1zM5 12h1v1h-1zM1 12h1v1h-1zM2 12h1v1h-1zM1 13h1v1h-1zM2 13h1v1h-1zM3 13h1v1h-1zM4 13h1v1h-1zM2 14h1v1h-1zM3 14h1v1h-1zM4 14h1v1h-1zM3 15h1v1h-1z" fill="#009400"/></svg>
<svg class="ic" style="left:91px;top:480px" width="16" height="16"><rect x="1.5" y="3.5" width="12" height="9" fill="#fff" stroke="#333" stroke-width="1.1"/><path d="M5.5 3.5 V12.5 M9.5 3.5 V12.5" stroke="#333" stroke-width="1.1"/><path d="M1.5 11.5 L5 6.5 H9.5 L13.5 11.5" fill="none" stroke="#10e010" stroke-width="1.1"/><path d="M0.3 1.5 H2.7 M4.3 1.5 H6.7 M8.3 1.5 H10.7 M1.5 1.5 V3 M5.5 1.5 V3 M9.5 1.5 V3" stroke="#1010f0" stroke-width="1.3"/><path d="M0 15 L1.5 13 L3 15 Z M6 15 L7.5 13 L9 15 Z M12 15 L13.5 13 L15 15 Z" fill="#f01010"/></svg>
<div class="tt" style="left:110px;top:480px">Analysis Settings</div>
<svg class="ic" style="left:81px;top:496px" width="10" height="16"><path d="M3 7h4v1h-4zM2 8h2v1h-2zM6 8h2v1h-2zM6 9h2v1h-2zM5 10h3v1h-3zM4 11h3v1h-3zM4 12h2v1h-2zM4 13h2v1h-2zM4 15h2v1h-2z" fill="#06068a"/></svg>
<svg class="ic" style="left:91px;top:496px" width="16" height="16"><path d="M0.5 4 L5 2 L9.5 4 V9.5 L5 11.5 L0.5 9.5 Z" fill="#fff" stroke="#333"/><path d="M5 6 L9.5 4 V9.5 L5 11.5 Z" fill="#0aa0ff" stroke="#333" stroke-width="0.8"/><path d="M0.5 4 L5 6 V11.5" fill="none" stroke="#333" stroke-width="0.8"/><path d="M6 14.5 L9.2 11.5 M9.5 14.5 L12.7 11.5" stroke="#d4a020" stroke-width="1.3"/></svg>
<div class="tt" style="left:110px;top:496px">Fixed Support</div>
<svg class="ic" style="left:81px;top:512px" width="10" height="16"><path d="M3 7h4v1h-4zM2 8h2v1h-2zM6 8h2v1h-2zM6 9h2v1h-2zM5 10h3v1h-3zM4 11h3v1h-3zM4 12h2v1h-2zM4 13h2v1h-2zM4 15h2v1h-2z" fill="#06068a"/></svg>
<svg class="ic" style="left:91px;top:512px" width="16" height="16"><path d="M0.5 4 L5 2 L9.5 4 V9.5 L5 11.5 L0.5 9.5 Z" fill="#fff" stroke="#333"/><path d="M5 6 L9.5 4 V9.5 L5 11.5 Z" fill="#10f010" stroke="#333" stroke-width="0.8"/><path d="M0.5 4 L5 6 V11.5" fill="none" stroke="#333" stroke-width="0.8"/><path d="M7.6 10.2 A3.1 3.1 0 1 0 12.9 9.6" fill="none" stroke="#d4a020" stroke-width="1.3"/><path d="M11.2 8.2 L14.6 7.6 L13.6 11 Z" fill="#d4a020"/></svg>
<div class="tt" style="left:110px;top:512px">Moment</div>
<svg class="ic" style="left:81px;top:528px" width="10" height="16"><path d="M8 8h1v1h-1zM7 9h1v1h-1zM8 9h1v1h-1zM6 10h1v1h-1zM7 10h1v1h-1zM5 11h1v1h-1zM6 11h1v1h-1zM4 12h1v1h-1zM5 12h1v1h-1zM1 12h1v1h-1zM2 12h1v1h-1zM1 13h1v1h-1zM2 13h1v1h-1zM3 13h1v1h-1zM4 13h1v1h-1zM2 14h1v1h-1zM3 14h1v1h-1zM4 14h1v1h-1zM3 15h1v1h-1z" fill="#009400"/></svg>
<svg class="ic" style="left:91px;top:528px" width="16" height="16"><path d="M10.5 3.8 V1.5 H0.5 V15" fill="none" stroke="#333" stroke-width="1"/><path d="M2.2 3.5 H7.8 M2.2 5.5 H7.8 M2.2 7.5 H5 M2.2 9.5 H5 M2.2 11.5 H5" stroke="#333" stroke-width="0.9"/><path d="M13.5 8.2 Q12.6 6.5 10.6 6.5 Q7 6.5 7 10.6 Q7 14.7 10.6 14.7 Q12.6 14.7 13.6 13" fill="none" stroke="#d9a514" stroke-width="1.3"/></svg>
<div class="tt" style="left:110px;top:528px;letter-spacing:-0.53px">Commands (APDL)</div>
<div class="exp" style="left:63px;top:548px"><div class="h"></div></div>
<svg class="ic" style="left:81px;top:544px" width="10" height="16"><path d="M3 7h4v1h-4zM2 8h2v1h-2zM6 8h2v1h-2zM6 9h2v1h-2zM5 10h3v1h-3zM4 11h3v1h-3zM4 12h2v1h-2zM4 13h2v1h-2zM4 15h2v1h-2z" fill="#06068a"/></svg>
<svg class="ic" style="left:91px;top:544px" width="16" height="16"><path d="M1.5 4.5 V1.5 H7 L8 2.5 H12.5 V4.5" fill="#d9a514" stroke="#3c3c3c"/><path d="M0.5 4.5 H13.5 L13 14.5 H1 Z" fill="#fbf0a4" stroke="#3c3c3c"/><path d="M3 8 Q4 6.6 6.5 6.9 L10 7.8 Q11 8.5 10.8 10.5 Q10.5 12.5 8.5 12.6 L5 12 Q2.8 11.5 2.8 9.8 Z" fill="url(#gS)"/><path d="M6 7.5 V12 M8.6 8 V12.4" stroke="#506040" stroke-width="0.5" opacity="0.6"/></svg>
<div class="tt b sel" style="left:111px;top:544px;letter-spacing:-0.15px">Solution (C6)</div>
<svg class="ic" style="left:108px;top:560px" width="10" height="16"><path d="M3.7 5 L9 5 L4.6 9.8 L8 10.2 L2.2 15.8 L3.2 11.8 L1 11.6 L1.2 10.2 Z" fill="#f6e416"/><path d="M9 5 L4.6 9.8 M8 10.2 L2.2 15.8" stroke="#9a7a00" stroke-width="1" stroke-dasharray="1 0.8"/><path d="M1 11.2 H3.6" stroke="#c8a000" stroke-width="1"/></svg>
<svg class="ic" style="left:118px;top:560px" width="16" height="16"><path d="M1.5 4.5 V1.5 H7 L8 2.5 H12.5 V4.5" fill="#d9a514" stroke="#3c3c3c"/><path d="M0.5 4.5 H13.5 L13 14.5 H1 Z" fill="#fbf0a4" stroke="#3c3c3c"/><circle cx="7.4" cy="7.6" r="0.8" fill="#4a90f0"/><path d="M6 9.5 H7.6 V13 M5.8 13.2 H9" fill="none" stroke="#4a90f0" stroke-width="1.2"/></svg>
<div class="tt" style="left:137px;top:560px;letter-spacing:-0.02px">Solution Information</div>
<svg class="ic" style="left:108px;top:576px" width="10" height="16"><path d="M3.7 5 L9 5 L4.6 9.8 L8 10.2 L2.2 15.8 L3.2 11.8 L1 11.6 L1.2 10.2 Z" fill="#f6e416"/><path d="M9 5 L4.6 9.8 M8 10.2 L2.2 15.8" stroke="#9a7a00" stroke-width="1" stroke-dasharray="1 0.8"/><path d="M1 11.2 H3.6" stroke="#c8a000" stroke-width="1"/></svg>
<svg class="ic" style="left:118px;top:576px" width="16" height="16"><path d="M0.5 4.8 L5 2.5 L9 3.6 L13.5 5.2 V11 L8.3 13.2 L0.5 9.4 Z" fill="#333"/><path d="M1.3 5.3 L4.3 6.3 V10.3 L1.3 9.1 Z" fill="url(#gL)"/><path d="M1.5 4.6 L5 3 L8.2 3.9 L4.6 5.6 Z" fill="#18e0d8"/><path d="M5.3 5.8 L8.8 4.2 L12.8 5.4 L8.5 7.2 Z" fill="url(#gT)"/><path d="M5.3 6.6 L7.9 7.7 V12.3 L5.3 11.1 Z" fill="url(#gF)"/><path d="M8.7 7.8 L12.9 6 V10.6 L8.7 12.4 Z" fill="url(#gR)"/></svg>
<div class="tt" style="left:137px;top:576px;letter-spacing:0.03px">Total Deformation</div>
<svg class="ic" style="left:108px;top:592px" width="10" height="16"><path d="M3.7 5 L9 5 L4.6 9.8 L8 10.2 L2.2 15.8 L3.2 11.8 L1 11.6 L1.2 10.2 Z" fill="#f6e416"/><path d="M9 5 L4.6 9.8 M8 10.2 L2.2 15.8" stroke="#9a7a00" stroke-width="1" stroke-dasharray="1 0.8"/><path d="M1 11.2 H3.6" stroke="#c8a000" stroke-width="1"/></svg>
<svg class="ic" style="left:118px;top:592px" width="16" height="16"><path d="M0.5 4.8 L5 2.5 L9 3.6 L13.5 5.2 V11 L8.3 13.2 L0.5 9.4 Z" fill="#333"/><path d="M1.3 5.3 L4.3 6.3 V10.3 L1.3 9.1 Z" fill="url(#gL)"/><path d="M1.5 4.6 L5 3 L8.2 3.9 L4.6 5.6 Z" fill="#18e0d8"/><path d="M5.3 5.8 L8.8 4.2 L12.8 5.4 L8.5 7.2 Z" fill="url(#gT)"/><path d="M5.3 6.6 L7.9 7.7 V12.3 L5.3 11.1 Z" fill="url(#gF)"/><path d="M8.7 7.8 L12.9 6 V10.6 L8.7 12.4 Z" fill="url(#gR)"/></svg>
<div class="tt" style="left:137px;top:592px;letter-spacing:-0.35px">USUM on Universal</div>
<svg class="ic" style="left:108px;top:608px" width="10" height="16"><path d="M3.7 5 L9 5 L4.6 9.8 L8 10.2 L2.2 15.8 L3.2 11.8 L1 11.6 L1.2 10.2 Z" fill="#f6e416"/><path d="M9 5 L4.6 9.8 M8 10.2 L2.2 15.8" stroke="#9a7a00" stroke-width="1" stroke-dasharray="1 0.8"/><path d="M1 11.2 H3.6" stroke="#c8a000" stroke-width="1"/></svg>
<svg class="ic" style="left:118px;top:608px" width="16" height="16"><path d="M0.5 4.8 L5 2.5 L9 3.6 L13.5 5.2 V11 L8.3 13.2 L0.5 9.4 Z" fill="#333"/><path d="M1.3 5.3 L4.3 6.3 V10.3 L1.3 9.1 Z" fill="url(#gL)"/><path d="M1.5 4.6 L5 3 L8.2 3.9 L4.6 5.6 Z" fill="#18e0d8"/><path d="M5.3 5.8 L8.8 4.2 L12.8 5.4 L8.5 7.2 Z" fill="url(#gT)"/><path d="M5.3 6.6 L7.9 7.7 V12.3 L5.3 11.1 Z" fill="url(#gF)"/><path d="M8.7 7.8 L12.9 6 V10.6 L8.7 12.4 Z" fill="url(#gR)"/></svg>
<div class="tt" style="left:137px;top:608px;letter-spacing:-0.43px">USUM on Bolts</div>
</div>

<div class="panel" style="left:310px;top:0;width:456px;height:704px">
 <div class="title">Scoping Wizard</div>
 <svg style="position:absolute;left:-311px;top:-1px" width="766" height="21"><path d="M403 8h1v1h-1zM407 8h1v1h-1zM411 8h1v1h-1zM415 8h1v1h-1zM419 8h1v1h-1zM423 8h1v1h-1zM427 8h1v1h-1zM431 8h1v1h-1zM435 8h1v1h-1zM439 8h1v1h-1zM443 8h1v1h-1zM447 8h1v1h-1zM451 8h1v1h-1zM455 8h1v1h-1zM459 8h1v1h-1zM463 8h1v1h-1zM467 8h1v1h-1zM471 8h1v1h-1zM475 8h1v1h-1zM479 8h1v1h-1zM483 8h1v1h-1zM487 8h1v1h-1zM491 8h1v1h-1zM495 8h1v1h-1zM499 8h1v1h-1zM503 8h1v1h-1zM507 8h1v1h-1zM511 8h1v1h-1zM515 8h1v1h-1zM519 8h1v1h-1zM523 8h1v1h-1zM527 8h1v1h-1zM531 8h1v1h-1zM535 8h1v1h-1zM539 8h1v1h-1zM543 8h1v1h-1zM547 8h1v1h-1zM551 8h1v1h-1zM555 8h1v1h-1zM559 8h1v1h-1zM563 8h1v1h-1zM567 8h1v1h-1zM571 8h1v1h-1zM575 8h1v1h-1zM579 8h1v1h-1zM583 8h1v1h-1zM587 8h1v1h-1zM591 8h1v1h-1zM595 8h1v1h-1zM599 8h1v1h-1zM603 8h1v1h-1zM607 8h1v1h-1zM611 8h1v1h-1zM615 8h1v1h-1zM619 8h1v1h-1zM623 8h1v1h-1zM627 8h1v1h-1zM631 8h1v1h-1zM635 8h1v1h-1zM639 8h1v1h-1zM643 8h1v1h-1zM647 8h1v1h-1zM651 8h1v1h-1zM655 8h1v1h-1zM659 8h1v1h-1zM663 8h1v1h-1zM667 8h1v1h-1zM671 8h1v1h-1zM675 8h1v1h-1zM679 8h1v1h-1zM683 8h1v1h-1zM687 8h1v1h-1zM691 8h1v1h-1zM695 8h1v1h-1zM699 8h1v1h-1zM703 8h1v1h-1zM707 8h1v1h-1zM711 8h1v1h-1zM405 10h1v1h-1zM409 10h1v1h-1zM413 10h1v1h-1zM417 10h1v1h-1zM421 10h1v1h-1zM425 10h1v1h-1zM429 10h1v1h-1zM433 10h1v1h-1zM437 10h1v1h-1zM441 10h1v1h-1zM445 10h1v1h-1zM449 10h1v1h-1zM453 10h1v1h-1zM457 10h1v1h-1zM461 10h1v1h-1zM465 10h1v1h-1zM469 10h1v1h-1zM473 10h1v1h-1zM477 10h1v1h-1zM481 10h1v1h-1zM485 10h1v1h-1zM489 10h1v1h-1zM493 10h1v1h-1zM497 10h1v1h-1zM501 10h1v1h-1zM505 10h1v1h-1zM509 10h1v1h-1zM513 10h1v1h-1zM517 10h1v1h-1zM521 10h1v1h-1zM525 10h1v1h-1zM529 10h1v1h-1zM533 10h1v1h-1zM537 10h1v1h-1zM541 10h1v1h-1zM545 10h1v1h-1zM549 10h1v1h-1zM553 10h1v1h-1zM557 10h1v1h-1zM561 10h1v1h-1zM565 10h1v1h-1zM569 10h1v1h-1zM573 10h1v1h-1zM577 10h1v1h-1zM581 10h1v1h-1zM585 10h1v1h-1zM589 10h1v1h-1zM593 10h1v1h-1zM597 10h1v1h-1zM601 10h1v1h-1zM605 10h1v1h-1zM609 10h1v1h-1zM613 10h1v1h-1zM617 10h1v1h-1zM621 10h1v1h-1zM625 10h1v1h-1zM629 10h1v1h-1zM633 10h1v1h-1zM637 10h1v1h-1zM641 10h1v1h-1zM645 10h1v1h-1zM649 10h1v1h-1zM653 10h1v1h-1zM657 10h1v1h-1zM661 10h1v1h-1zM665 10h1v1h-1zM669 10h1v1h-1zM673 10h1v1h-1zM677 10h1v1h-1zM681 10h1v1h-1zM685 10h1v1h-1zM689 10h1v1h-1zM693 10h1v1h-1zM697 10h1v1h-1zM701 10h1v1h-1zM705 10h1v1h-1zM709 10h1v1h-1zM403 12h1v1h-1zM407 12h1v1h-1zM411 12h1v1h-1zM415 12h1v1h-1zM419 12h1v1h-1zM423 12h1v1h-1zM427 12h1v1h-1zM431 12h1v1h-1zM435 12h1v1h-1zM439 12h1v1h-1zM443 12h1v1h-1zM447 12h1v1h-1zM451 12h1v1h-1zM455 12h1v1h-1zM459 12h1v1h-1zM463 12h1v1h-1zM467 12h1v1h-1zM471 12h1v1h-1zM475 12h1v1h-1zM479 12h1v1h-1zM483 12h1v1h-1zM487 12h1v1h-1zM491 12h1v1h-1zM495 12h1v1h-1zM499 12h1v1h-1zM503 12h1v1h-1zM507 12h1v1h-1zM511 12h1v1h-1zM515 12h1v1h-1zM519 12h1v1h-1zM523 12h1v1h-1zM527 12h1v1h-1zM531 12h1v1h-1zM535 12h1v1h-1zM539 12h1v1h-1zM543 12h1v1h-1zM547 12h1v1h-1zM551 12h1v1h-1zM555 12h1v1h-1zM559 12h1v1h-1zM563 12h1v1h-1zM567 12h1v1h-1zM571 12h1v1h-1zM575 12h1v1h-1zM579 12h1v1h-1zM583 12h1v1h-1zM587 12h1v1h-1zM591 12h1v1h-1zM595 12h1v1h-1zM599 12h1v1h-1zM603 12h1v1h-1zM607 12h1v1h-1zM611 12h1v1h-1zM615 12h1v1h-1zM619 12h1v1h-1zM623 12h1v1h-1zM627 12h1v1h-1zM631 12h1v1h-1zM635 12h1v1h-1zM639 12h1v1h-1zM643 12h1v1h-1zM647 12h1v1h-1zM651 12h1v1h-1zM655 12h1v1h-1zM659 12h1v1h-1zM663 12h1v1h-1zM667 12h1v1h-1zM671 12h1v1h-1zM675 12h1v1h-1zM679 12h1v1h-1zM683 12h1v1h-1zM687 12h1v1h-1zM691 12h1v1h-1zM695 12h1v1h-1zM699 12h1v1h-1zM703 12h1v1h-1zM707 12h1v1h-1zM711 12h1v1h-1z" fill="#6aaae8"/><path d="M715.5 9 H724.5 L720 13.7 Z" fill="#fff"/><rect x="733" y="5" width="1" height="7" fill="#fff"/><rect x="737" y="5" width="2" height="7" fill="#fff"/><rect x="733" y="5" width="6" height="1" fill="#fff"/><rect x="732" y="12" width="8" height="1" fill="#fff"/><rect x="735" y="13" width="1" height="4" fill="#fff"/><path d="M748.3 6.8 L756.3 14.8 M756.3 6.8 L748.3 14.8" stroke="#fff" stroke-width="1.5"/></svg>
</div>

<div style="position:absolute;left:316.5px;top:31px;font-size:19.6px;line-height:28px;color:#333">Model</div>

<!-- buttons -->
<div class="btn" style="position:absolute;left:690px;top:31px;width:24px;height:26px;background:#eee;border:1px solid #aaa;border-radius:3px"></div>
<div class="btn" style="position:absolute;left:719px;top:31px;width:24px;height:26px;background:#eee;border:1px solid #aaa;border-radius:3px"></div>
<div class="btn" style="position:absolute;left:690px;top:65px;width:24px;height:26px;background:#eee;border:1px solid #aaa;border-radius:3px"></div>
<div class="btn" style="position:absolute;left:719px;top:65px;width:24px;height:26px;background:#eee;border:1px solid #aaa;border-radius:3px"></div>
<svg style="position:absolute;left:690px;top:31px" width="24" height="26">
 <path d="M8.5 6 V20 M12.5 6 V20 M17.5 6 V20" stroke="#333" stroke-width="1.1"/>
 <rect x="7" y="9" width="3" height="3" fill="#d9a514"/><rect x="11" y="14" width="3" height="3" fill="#d9a514"/><rect x="16" y="11" width="3" height="3" fill="#d9a514"/>
</svg>
<svg style="position:absolute;left:719px;top:31px" width="24" height="26">
 <circle cx="12.9" cy="12.9" r="6.6" fill="none" stroke="#333" stroke-width="1.1"/>
 <rect x="12" y="8.3" width="2" height="2" fill="#3a8ef0"/><rect x="12" y="11.2" width="2" height="6" fill="#3a8ef0"/><rect x="11" y="11.2" width="1" height="1.2" fill="#3a8ef0"/><rect x="10.8" y="16.2" width="4.4" height="1.4" fill="#3a8ef0"/>
</svg>
<svg style="position:absolute;left:690px;top:65px" width="24" height="26">
 <rect x="6" y="6" width="14" height="14" fill="#75cc30"/>
 <path d="M8.2 13.6 L12.5 17.5 L18.5 8.5" fill="none" stroke="#fff" stroke-width="1.5"/>
</svg>
<svg style="position:absolute;left:719px;top:65px" width="24" height="26">
 <circle cx="12.2" cy="12.2" r="4.7" fill="#eef0f4" stroke="#2a2a2a" stroke-width="1.8"/>
 <path d="M10.2 10.8 L12.2 9.8 L14.2 10.8 V13.4 L12.2 14.6 L10.2 13.4 Z" fill="#3f86e8"/>
 <path d="M10.2 10.8 L12.2 9.8 L14.2 10.8 L12.2 11.8 Z" fill="#fff"/>
 <path d="M12.2 11.8 V14.6" stroke="#e0e8f4" stroke-width="0.6"/>
 <path d="M15.6 15.6 L19.4 19.4" stroke="#2a2a2a" stroke-width="1.8"/>
</svg>

<!-- table -->
<div style="position:absolute;left:312px;top:112px;width:434px;height:45px;background:#e6e6e6;border-top:1px solid #c8c8c8;border-right:1px solid #c8c8c8;border-top-right-radius:3px"></div>
<div class="hl" style="top:131px;background:#c4c4c4"></div>
<div class="hl" style="top:156px;background:#b8b8b8"></div>
<div style="position:absolute;left:342px;top:113px;width:1px;height:555px;background:#c4c4c4"></div>
<div style="position:absolute;left:592px;top:113px;width:1px;height:555px;background:#c4c4c4"></div>
<div style="position:absolute;left:745px;top:113px;width:1px;height:555px;background:#c8c8c8"></div>
<div style="position:absolute;left:341px;top:113px;width:249px;text-align:center;font-size:12px;line-height:20px">Name</div>
<div style="position:absolute;left:591px;top:113px;width:152px;text-align:center;font-size:12.5px;line-height:20px">Unresolved Scoping</div>
<div style="position:absolute;left:346px;top:136px;width:243px;height:16px;background:#fff;border:1px solid #d0d0d0;border-radius:3px"></div>
<div class="tr sel" style="top:157px;height:18px"></div>
<div class="hl" style="top:175px"></div>
<div class="sqbg" style="top:159px"></div>
<div class="sq g" style="top:161px"></div>
<div class="tn" style="top:158px">Contact Region - Contact</div>
<div class="tf" style="top:158px">4 Faces</div>
<div class="hl" style="top:192px"></div>
<div class="sq g" style="top:178px"></div>
<div class="tn" style="top:175px">Contact Region - Target</div>
<div class="tf" style="top:175px">2 Faces</div>
<div class="hl" style="top:209px"></div>
<div class="sq g" style="top:195px"></div>
<div class="tn" style="top:192px">Contact Region 2 - Contact</div>
<div class="tf" style="top:192px">3 Faces</div>
<div class="hl" style="top:226px"></div>
<div class="sq g" style="top:212px"></div>
<div class="tn" style="top:209px">Contact Region 2 - Target</div>
<div class="tf" style="top:209px">1 Face</div>
<div class="hl" style="top:243px"></div>
<div class="sq g" style="top:229px"></div>
<div class="tn" style="top:226px">Contact Region 3 - Contact</div>
<div class="tf" style="top:226px">4 Faces</div>
<div class="hl" style="top:260px"></div>
<div class="sq g" style="top:246px"></div>
<div class="tn" style="top:243px">Contact Region 3 - Target</div>
<div class="tf" style="top:243px">2 Faces</div>
<div class="hl" style="top:277px"></div>
<div class="sq g" style="top:263px"></div>
<div class="tn" style="top:260px">Contact Region 4 - Contact</div>
<div class="tf" style="top:260px">3 Faces</div>
<div class="hl" style="top:294px"></div>
<div class="sq g" style="top:280px"></div>
<div class="tn" style="top:277px">Contact Region 4 - Target</div>
<div class="tf" style="top:277px">1 Face</div>
<div class="hl" style="top:311px"></div>
<div class="sq g" style="top:297px"></div>
<div class="tn" style="top:294px">Contact Region 5 - Contact</div>
<div class="tf" style="top:294px">5 Faces</div>
<div class="hl" style="top:328px"></div>
<div class="sq g" style="top:314px"></div>
<div class="tn" style="top:311px">Contact Region 5 - Target</div>
<div class="tf" style="top:311px">1 Face</div>
<div class="hl" style="top:345px"></div>
<div class="sq g" style="top:331px"></div>
<div class="tn" style="top:328px">Contact Region 6 - Contact</div>
<div class="tf" style="top:328px">4 Faces</div>
<div class="hl" style="top:362px"></div>
<div class="sq g" style="top:348px"></div>
<div class="tn" style="top:345px">Contact Region 6 - Target</div>
<div class="tf" style="top:345px">2 Faces</div>
<div class="hl" style="top:379px"></div>
<div class="sq g" style="top:365px"></div>
<div class="tn" style="top:362px">Contact Region 7 - Contact</div>
<div class="tf" style="top:362px">2 Faces</div>
<div class="hl" style="top:396px"></div>
<div class="sq g" style="top:382px"></div>
<div class="tn" style="top:379px">Contact Region 7 - Target</div>
<div class="tf" style="top:379px">4 Faces</div>
<div class="hl" style="top:413px"></div>
<div class="sq g" style="top:399px"></div>
<div class="tn" style="top:396px">Contact Region 8 - Contact</div>
<div class="tf" style="top:396px">5 Faces</div>
<div class="hl" style="top:430px"></div>
<div class="sq g" style="top:416px"></div>
<div class="tn" style="top:413px">Contact Region 8 - Target</div>
<div class="tf" style="top:413px">1 Face</div>
<div class="hl" style="top:447px"></div>
<div class="sq g" style="top:433px"></div>
<div class="tn" style="top:430px">Contact Region 9 - Contact</div>
<div class="tf" style="top:430px">4 Faces</div>
<div class="hl" style="top:464px"></div>
<div class="sq g" style="top:450px"></div>
<div class="tn" style="top:447px">Contact Region 9 - Target</div>
<div class="tf" style="top:447px">2 Faces</div>
<div class="hl" style="top:481px"></div>
<div class="sq g" style="top:467px"></div>
<div class="tn" style="top:464px">Contact Region 10 - Contact</div>
<div class="tf" style="top:464px">2 Faces</div>
<div class="hl" style="top:498px"></div>
<div class="sq g" style="top:484px"></div>
<div class="tn" style="top:481px">Contact Region 10 - Target</div>
<div class="tf" style="top:481px">4 Faces</div>
<div class="hl" style="top:515px"></div>
<div class="sq g" style="top:501px"></div>
<div class="tn" style="top:498px">Contact Region 11 - Contact</div>
<div class="tf" style="top:498px">6 Faces</div>
<div class="hl" style="top:532px"></div>
<div class="sq g" style="top:518px"></div>
<div class="tn" style="top:515px">Contact Region 11 - Target</div>
<div class="tf" style="top:515px">10 Faces</div>
<div class="hl" style="top:549px"></div>
<div class="sq g" style="top:535px"></div>
<div class="tn" style="top:532px">Contact Region 12 - Contact</div>
<div class="tf" style="top:532px">2 Faces</div>
<div class="hl" style="top:566px"></div>
<div class="sq r" style="top:552px"></div>
<div class="tn" style="top:549px">Contact Region 12 - Target</div>
<div class="tf" style="top:549px">2 Faces</div>
<div class="hl" style="top:583px"></div>
<div class="sq g" style="top:569px"></div>
<div class="tn" style="top:566px">Contact Region 13 - Contact</div>
<div class="tf" style="top:566px">1 Face</div>
<div class="hl" style="top:600px"></div>
<div class="sq g" style="top:586px"></div>
<div class="tn" style="top:583px">Contact Region 13 - Target</div>
<div class="tf" style="top:583px">3 Faces</div>
<div class="hl" style="top:617px"></div>
<div class="sq g" style="top:603px"></div>
<div class="tn" style="top:600px">Contact Region 14 - Contact</div>
<div class="tf" style="top:600px">1 Face</div>
<div class="hl" style="top:634px"></div>
<div class="sq g" style="top:620px"></div>
<div class="tn" style="top:617px">Contact Region 14 - Target</div>
<div class="tf" style="top:617px">3 Faces</div>
<div class="hl" style="top:651px"></div>
<div class="sq r" style="top:637px"></div>
<div class="tn" style="top:634px">Fixed Support</div>
<div class="tf" style="top:634px">1 Face</div>
<div class="sq g" style="top:654px"></div>
<div class="tn" style="top:651px">Moment</div>
<div class="tf" style="top:651px">1 Face</div>
<div style="position:absolute;left:342px;top:157px;width:1px;height:511px;background:#c4c4c4"></div>
<div style="position:absolute;left:592px;top:157px;width:1px;height:511px;background:#c4c4c4"></div>
<div style="position:absolute;left:745px;top:157px;width:1px;height:511px;background:#c8c8c8"></div>

<!-- footer -->
<div style="position:absolute;left:312px;top:668px;width:434px;height:28px;background:#e8e8e8;border-right:1px solid #cfcfcf;border-bottom:1px solid #cfcfcf;border-bottom-left-radius:3px;border-bottom-right-radius:3px"></div>
<div style="position:absolute;left:377px;top:674px;font-size:13px;line-height:20px;color:#111">Go to page:</div>
<div style="position:absolute;left:452px;top:672px;width:35px;height:21px;background:#fff;border:1px solid #d4d4d4;border-radius:3px;font-size:13px;line-height:21px;text-align:right;padding-right:4px">1</div>
<div style="position:absolute;left:491px;top:674px;font-size:13px;line-height:20px;color:#111">Show rows:</div>
<div style="position:absolute;left:567px;top:672px;width:41px;height:21px;background:#eee;border:1px solid #c4c4c4;border-radius:3px;font-size:13px;line-height:21px;padding-left:3px">30</div>
<svg style="position:absolute;left:592px;top:681px" width="12" height="7"><path d="M0.5 0.5 H10.5 L5.5 5.5 Z" fill="#888"/></svg>
<div style="position:absolute;left:614px;top:674px;font-size:13px;line-height:20px;color:#111">1-30 of 34</div>
<div style="position:absolute;left:681px;top:672px;width:29px;height:21px;background:#eee;border:1px solid #c4c4c4;border-radius:3px"></div>
<div style="position:absolute;left:713px;top:672px;width:29px;height:21px;background:#eee;border:1px solid #c4c4c4;border-radius:3px"></div>
<svg style="position:absolute;left:692px;top:678px" width="8" height="10"><path d="M6 0.5 V9 L0.5 4.75 Z" fill="#777"/></svg>
<svg style="position:absolute;left:724px;top:678px" width="8" height="10"><path d="M1 0.5 V9 L6.5 4.75 Z" fill="#777"/></svg>

<!-- scrollbar -->
<div style="position:absolute;left:749px;top:21px;width:16px;height:682px;background:#f0f0f0"></div>
<div style="position:absolute;left:749px;top:38px;width:16px;height:619px;background:#cdcdcd"></div>
<svg style="position:absolute;left:752px;top:26px" width="10" height="8"><path d="M1.2 6.5 L5 2.7 L8.8 6.5" fill="none" stroke="#606060" stroke-width="1.7"/></svg>
<svg style="position:absolute;left:752px;top:690px" width="10" height="8"><path d="M1 2 L5 6 L9 2" fill="none" stroke="#606060" stroke-width="2"/></svg>

</body></html>
